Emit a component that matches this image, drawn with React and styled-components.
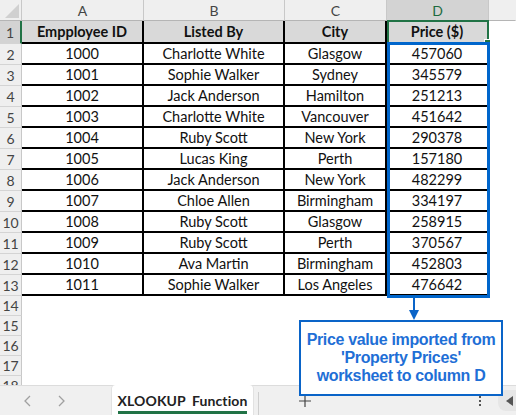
import React from "react";
import styled, { createGlobalStyle } from "styled-components";

const GlobalStyle = createGlobalStyle`
  html, body { margin: 0; padding: 0; background: #fff; }
  body { width: 516px; height: 415px; overflow: hidden; }
`;

const COLS = ["A", "B", "C", "D"];
const WIDTHS = "22px 122px 141px 102px 102px 1fr";

const rows = [
  ["1000", "Charlotte White", "Glasgow", "457060"],
  ["1001", "Sophie Walker", "Sydney", "345579"],
  ["1002", "Jack Anderson", "Hamilton", "251213"],
  ["1003", "Charlotte White", "Vancouver", "451642"],
  ["1004", "Ruby Scott", "New York", "290378"],
  ["1005", "Lucas King", "Perth", "157180"],
  ["1006", "Jack Anderson", "New York", "482299"],
  ["1007", "Chloe Allen", "Birmingham", "334197"],
  ["1008", "Ruby Scott", "Glasgow", "258915"],
  ["1009", "Ruby Scott", "Perth", "370567"],
  ["1010", "Ava Martin", "Birmingham", "452803"],
  ["1011", "Sophie Walker", "Los Angeles", "476642"],
];

const Screen = styled.div`
  position: relative;
  width: 516px;
  height: 415px;
  display: flex;
  flex-direction: column;
  font-family: Lato, "Liberation Sans", sans-serif;
  overflow: hidden;
`;

const Sheet = styled.div`
  position: relative;
  height: 385px;
  overflow: hidden;
  display: grid;
  grid-template-columns: ${WIDTHS};
  grid-template-rows: 21px 23px repeat(12, 21px) repeat(5, 20px);
  align-content: start;
`;

const Corner = styled.div`
  background: #efefef;
  border-right: 1px solid #c8c8c8;
  border-bottom: 1px solid #b5b5b5;
  position: relative;
  &::after {
    content: "";
    position: absolute;
    right: 2px;
    bottom: 2px;
    border-left: 14px solid transparent;
    border-bottom: 14px solid #d0d0d0;
  }
`;

const ColHead = styled.div`
  display: flex;
  align-items: center;
  justify-content: center;
  background: ${(p) => (p.$active ? "#d3d3d3" : "#efefef")};
  color: ${(p) => (p.$active ? "#1d6b3f" : "#444")};
  font-size: 14px;
  border-right: 1px solid ${(p) => (p.$last ? "transparent" : "#c8c8c8")};
  border-bottom: 1px solid #b5b5b5;
`;

const RowHead = styled.div`
  display: flex;
  align-items: center;
  justify-content: center;
  background: ${(p) => (p.$active ? "#d3d3d3" : "#efefef")};
  color: #444;
  font-size: 14px;
  border-right: ${(p) => (p.$active ? "2px solid #217346" : "1px solid #c8c8c8")};
  border-bottom: 1px solid #d4d4d4;
  box-sizing: border-box;
`;

const Cell = styled.div`
  display: flex;
  align-items: center;
  justify-content: center;
  box-sizing: border-box;
  font-size: 14.5px;
  color: #111;
  white-space: nowrap;
  background: ${(p) => (p.$head ? "#d9d9d9" : "#fff")};
  font-weight: ${(p) => (p.$head ? 700 : 400)};
  border-right: 2px solid #000;
  border-bottom: 2px solid #000;
`;

const Blank = styled.div`
  background: #fff;
`;

const Row = styled.div`
  display: contents;
`;

const ColFrame = styled.div`
  position: absolute;
  left: 387px;
  top: 42px;
  width: 103px;
  height: 256px;
  box-sizing: border-box;
  border: 3px solid #0066cc;
  pointer-events: none;
`;

const ActiveFrame = styled.div`
  position: absolute;
  left: 387px;
  top: 20px;
  width: 102px;
  height: 24px;
  box-sizing: border-box;
  border: 2px solid #217346;
  &::after {
    content: "";
    position: absolute;
    right: -4px;
    bottom: -4px;
    width: 5px;
    height: 5px;
    background: #217346;
    border: 1px solid #fff;
  }
`;

const Arrow = styled.svg`
  position: absolute;
  left: 407px;
  top: 298px;
`;

const Callout = styled.div`
  position: absolute;
  left: 299px;
  top: 320px;
  width: 204px;
  height: 76px;
  box-sizing: border-box;
  border: 2px solid #0a64c8;
  background: #fff;
  display: flex;
  align-items: center;
  justify-content: center;
  text-align: center;
  font-family: "Liberation Sans", Arial, sans-serif;
  font-weight: 700;
  font-size: 16px;
  letter-spacing: -0.35px;
  line-height: 18px;
  color: #1f6fd6;
  z-index: 2;
`;

const TabBar = styled.div`
  height: 30px;
  background: #f0f0f0;
  border-top: 1px solid #dcdcdc;
  box-sizing: border-box;
  display: flex;
  align-items: stretch;
  font-family: Lato, "Liberation Sans", sans-serif;
`;

const NavBtn = styled.div`
  width: 33px;
  display: flex;
  align-items: center;
  justify-content: center;
  color: #9a9a9a;
  &:first-child { margin-left: 11px; }
`;

const Tab = styled.div`
  margin-left: 35px;
  width: 141px;
  margin-top: -1px;
  background: #fff;
  border-radius: 4px 4px 0 0;
  box-shadow: 0 0 0 1px #e2e2e2;
  display: flex;
  flex-direction: column;
  align-items: center;
  justify-content: center;
  font-size: 14px;
  font-weight: 700;
  color: #222;
  letter-spacing: 0.1px;
  word-spacing: 3px;
`;

const TabLabel = styled.span`
  padding: 4px 0 2px;
  border-bottom: 3px solid #217346;
  margin-top: 2px;
`;

const Sep = styled.div`
  width: 1px;
  margin: 6px 0 0 5px;
  background: #cfcfcf;
`;

const Plus = styled.div`
  margin-left: 36px;
  width: 20px;
  display: flex;
  align-items: center;
  justify-content: center;
`;

const Dots = styled.div`
  margin-left: auto;
  width: 12px;
  display: flex;
  flex-direction: column;
  align-items: center;
  justify-content: center;
  gap: 2px;
  margin-right: 12px;
  & span {
    width: 2px;
    height: 2px;
    background: #555;
  }
`;

const ScrollBtn = styled.div`
  width: 16px;
  background: #e6e6e6;
  border-radius: 8px 0 0 8px;
  margin: 4px 0;
  display: flex;
  align-items: center;
  justify-content: flex-end;
  padding-right: 2px;
`;

export default function App() {
  return (
    <Screen>
      <GlobalStyle />
      <Sheet>
        <Corner />
        {COLS.map((c) => (
          <ColHead key={c} $active={c === "D"}>
            {c}
          </ColHead>
        ))}
        <ColHead $last />

        <RowHead $active>1</RowHead>
        <Cell $head>Empployee ID</Cell>
        <Cell $head>Listed By</Cell>
        <Cell $head>City</Cell>
        <Cell $head>Price ($)</Cell>
        <Blank />

        {rows.map((r, i) => (
          <Row key={i}>
            <RowHead>{i + 2}</RowHead>
            {r.map((v, j) => (
              <Cell key={j}>{v}</Cell>
            ))}
            <Blank />
          </Row>
        ))}

        {[14, 15, 16, 17, 18].map((n) => (
          <Row key={n}>
            <RowHead>{n}</RowHead>
            <Blank />
            <Blank />
            <Blank />
            <Blank />
            <Blank />
          </Row>
        ))}

        <ActiveFrame />
        <ColFrame />
      </Sheet>

      <Arrow width="14" height="24" viewBox="0 0 14 24">
        <line x1="7" y1="0" x2="7" y2="14" stroke="#0a64c8" strokeWidth="2" />
        <path d="M2 12 L12 12 L7 22 Z" fill="#0a64c8" />
      </Arrow>

      <Callout>
        Price value imported from
        <br />
        'Property Prices'
        <br />
        worksheet to column D
      </Callout>

      <TabBar>
        <NavBtn>
          <svg width="10" height="14" viewBox="0 0 10 14">
            <path d="M7 2 L2 7 L7 12" fill="none" stroke="#a0a0a0" strokeWidth="1.3" />
          </svg>
        </NavBtn>
        <NavBtn>
          <svg width="10" height="14" viewBox="0 0 10 14">
            <path d="M3 2 L8 7 L3 12" fill="none" stroke="#a0a0a0" strokeWidth="1.3" />
          </svg>
        </NavBtn>
        <Tab>
          <TabLabel>XLOOKUP Function</TabLabel>
        </Tab>
        <Sep />
        <Plus>
          <svg width="14" height="14" viewBox="0 0 14 14">
            <path d="M7 1 V13 M1 7 H13" stroke="#444" strokeWidth="1.2" />
          </svg>
        </Plus>
        <Dots>
          <span />
          <span />
          <span />
        </Dots>
        <ScrollBtn>
          <svg width="8" height="10" viewBox="0 0 8 10">
            <path d="M7 0 L0 5 L7 10 Z" fill="#555" />
          </svg>
        </ScrollBtn>
      </TabBar>
    </Screen>
  );
}
